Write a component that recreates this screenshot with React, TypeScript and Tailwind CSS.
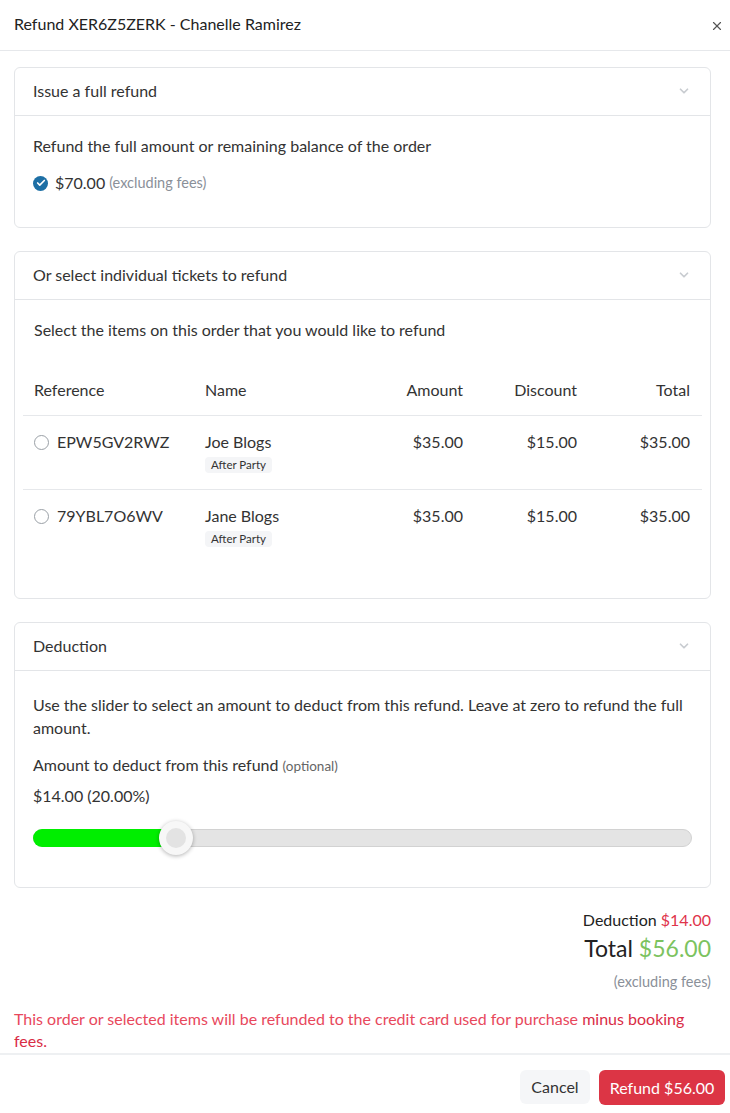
import { X, ChevronDown, Check } from 'lucide-react'

interface TicketRow {
  reference: string
  name: string
  tag: string
  amount: string
  discount: string
  total: string
}

const rows: TicketRow[] = [
  { reference: 'EPW5GV2RWZ', name: 'Joe Blogs', tag: 'After Party', amount: '$35.00', discount: '$15.00', total: '$35.00' },
  { reference: '79YBL7O6WV', name: 'Jane Blogs', tag: 'After Party', amount: '$35.00', discount: '$15.00', total: '$35.00' },
]

function Section({ title, children, className }: { title: string; children: React.ReactNode; className?: string }) {
  return (
    <div className="border border-[#e3e5e8] rounded-md bg-white">
      <div className="flex items-center justify-between h-[48px] pl-[18px] pr-[19px] pb-[2px] border-b border-[#e3e5e8]">
        <span className="text-[16px] leading-[24px] text-[#333]">{title}</span>
        <ChevronDown className="w-[14px] h-[14px] text-[#c8ccd0]" strokeWidth={3} />
      </div>
      <div className={className}>{children}</div>
    </div>
  )
}

export default function App() {
  return (
    <div className="h-screen w-full flex flex-col bg-white text-[#333]" style={{ fontFamily: 'Lato, "Open Sans", sans-serif' }}>
      <div className="flex items-center justify-between h-[51px] pl-[14px] pr-[6px] pb-[3px] border-b border-[#e6e8eb] shrink-0">
        <span className="text-[16px] text-[#222]">Refund XER6Z5ZERK - Chanelle Ramirez</span>
        <X className="w-[14px] h-[14px] text-[#555] mt-[4px]" strokeWidth={2} />
      </div>

      <div className="flex-1 min-h-0 overflow-hidden pl-[14px] pr-[19px] pt-[16px] text-[16px] leading-[24px]">
        <Section title="Issue a full refund" className="px-[18px] pt-[18px] pb-[32px]">
          <p>Refund the full amount or remaining balance of the order</p>
          <div className="flex items-center gap-[7px] mt-[13px]">
            <span className="w-[15px] h-[15px] rounded-full bg-[#1d6fa5] flex items-center justify-center">
              <Check className="w-[10px] h-[10px] text-white" strokeWidth={4} />
            </span>
            <span>$70.00</span>
            <span className="text-[14.5px] text-[#8a9099] -ml-[3px]">(excluding fees)</span>
          </div>
        </Section>

        <div className="h-[23px]" />

        <Section title="Or select individual tickets to refund" className="px-[8px] pt-[18px] pb-[35px]">
          <p className="px-[11px]">Select the items on this order that you would like to refund</p>
          <table className="w-full mt-[36px] border-collapse">
            <thead>
              <tr className="border-b border-[#e6e8eb]">
                <th className="font-normal text-left pl-[11px] pb-[13px] w-[182px]">Reference</th>
                <th className="font-normal text-left pb-[13px]">Name</th>
                <th className="font-normal text-right pb-[13px]">Amount</th>
                <th className="font-normal text-right pb-[13px] w-[114px]">Discount</th>
                <th className="font-normal text-right pr-[12px] pb-[13px] w-[125px]">Total</th>
              </tr>
            </thead>
            <tbody>
              {rows.map((r, i) => (
                <tr key={r.reference} className={i === 0 ? 'border-b border-[#e6e8eb]' : ''}>
                  <td className="pl-[11px] pt-[14px] pb-[16px] align-top">
                    <div className="flex items-center gap-[8px]">
                      <span className="w-[15px] h-[15px] rounded-full border border-[#9aa0a6] bg-white" />
                      <span>{r.reference}</span>
                    </div>
                  </td>
                  <td className="pt-[14px] pb-[16px] align-top">
                    <div>{r.name}</div>
                    <div className="w-fit mt-[3px] px-[6px] h-[16px] leading-[16px] rounded bg-[#f4f5f7] text-[11.5px] text-[#333]">{r.tag}</div>
                  </td>
                  <td className="pt-[14px] align-top text-right">{r.amount}</td>
                  <td className="pt-[14px] align-top text-right">{r.discount}</td>
                  <td className="pt-[14px] pr-[12px] align-top text-right">{r.total}</td>
                </tr>
              ))}
            </tbody>
          </table>
        </Section>

        <div className="h-[23px]" />

        <Section title="Deduction" className="px-[18px] pt-[22px] pb-[40px]">
          <p className="leading-[23px]">
            Use the slider to select an amount to deduct from this refund. Leave at zero to refund the full amount.
          </p>
          <p className="mt-[14px]">
            Amount to deduct from this refund <span className="text-[13.5px] text-[#666]">(optional)</span>
          </p>
          <p className="mt-[6px]">$14.00 (20.00%)</p>
          <div className="relative mt-[21px] h-[18px] rounded-full bg-[#e4e4e4] border border-[#d2d2d2]">
            <div className="absolute left-[-1px] top-[-1px] bottom-[-1px] w-[142px] rounded-l-full bg-[#00ee00]" />
            <div className="absolute top-1/2 -translate-y-1/2 left-[125px] w-[34px] h-[34px] rounded-full bg-[#f7f7f7] shadow-[0_1px_4px_rgba(0,0,0,0.3)] flex items-center justify-center">
              <div className="w-[20px] h-[20px] rounded-full bg-[#e3e3e3]" />
            </div>
          </div>
        </Section>

        <div className="flex flex-col items-end mt-[20px]">
          <div className="text-[#222]">
            Deduction <span className="text-[#e0344a]">$14.00</span>
          </div>
          <div className="text-[23px] text-[#222] mt-[1px] leading-[30px]">
            Total <span className="text-[#7cc35f]">$56.00</span>
          </div>
          <div className="text-[14.5px] leading-[20px] text-[#8a9099] mt-[9px]">(excluding fees)</div>
        </div>

        <p className="text-[#e8485c] mt-[16px] leading-[22px]">
          This order or selected items will be refunded to the credit card used for purchase{' '}
          <span className="text-[#d92c45]">minus booking</span> <span className="text-[#d92c45]">fees.</span>
        </p>
      </div>

      <div className="flex items-start justify-end gap-[9px] h-[60px] border-t-2 border-[#eef0f2] pt-[15px] pr-[5px] shrink-0">
        <button className="h-[34px] w-[70px] rounded-md bg-[#f5f6f8] text-[16px] text-[#333]">Cancel</button>
        <button className="h-[35px] w-[126px] rounded-md bg-[#dc3545] text-[16px] text-white">Refund $56.00</button>
      </div>
    </div>
  )
}
